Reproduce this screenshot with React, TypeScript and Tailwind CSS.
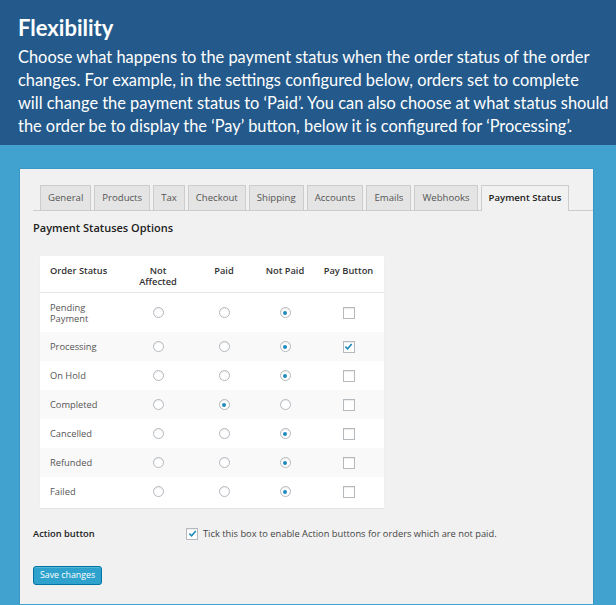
const rows = [
  { name: 'Pending Payment', sel: 2, pay: false, tall: true },
  { name: 'Processing', sel: 2, pay: true },
  { name: 'On Hold', sel: 2, pay: false },
  { name: 'Completed', sel: 1, pay: false },
  { name: 'Cancelled', sel: 2, pay: false },
  { name: 'Refunded', sel: 2, pay: false },
  { name: 'Failed', sel: 2, pay: false },
];

const tabs = ['General', 'Products', 'Tax', 'Checkout', 'Shipping', 'Accounts', 'Emails', 'Webhooks', 'Payment Status'];

const Radio = ({ on }: { on: boolean }) => (
  <span className="w-[11px] h-[11px] rounded-full border border-[#b4b9be] bg-white shadow-[inset_0_1px_1px_rgba(0,0,0,0.08)] flex items-center justify-center">
    {on && <span className="w-[4px] h-[4px] rounded-full bg-[#1e8cbe]" />}
  </span>
);

const Check = ({ on }: { on: boolean }) => (
  <span className="w-[12px] h-[12px] border border-[#b4b9be] bg-white shadow-[inset_0_1px_1px_rgba(0,0,0,0.08)] flex items-center justify-center">
    {on && (
      <svg width="9" height="9" viewBox="0 0 10 10">
        <path d="M1.5 5.2 L4 7.6 L8.6 2.2" fill="none" stroke="#1e8cbe" strokeWidth="1.8" />
      </svg>
    )}
  </span>
);

export default function App() {
  return (
    <div className="w-[616px] h-[605px] overflow-hidden bg-[#41a2d0] font-['Open_Sans',sans-serif]">
      <div className="h-[145px] bg-[#245a8b] pl-[18px] pt-[14px] text-white font-['Lato',sans-serif]">
        <h1 className="text-[22px] font-bold leading-[28px]">Flexibility</h1>
        <p className="w-[598px] whitespace-nowrap text-[16.4px] leading-[23px] mt-[3px]">
          Choose what happens to the payment status when the order status of the order<br />
          changes. For example, in the settings configured below, orders set to complete<br />
          will change the payment status to ‘Paid’. You can also choose at what status should<br />
          the order be to display the ‘Pay’ button, below it is configured for ‘Processing’.
        </p>
      </div>

      <div className="ml-[19px] mt-[23px] w-[575px] h-[436px] bg-[#f1f1f1] border-t border-l border-r border-[#3b97c6] pt-[16px] pl-[13px]">
        <div className="flex gap-[3px] pl-[7px] border-b border-[#cccccc] h-[26px] items-end">
          {tabs.map((t) => {
            const active = t === 'Payment Status';
            return (
              <div
                key={t}
                className={
                  active
                    ? 'h-[26px] px-[7px] flex items-center whitespace-nowrap text-[9.6px] font-semibold text-[#222] bg-[#f1f1f1] border border-b-0 border-[#cccccc] -mb-px'
                    : 'h-[25px] px-[7px] flex items-center whitespace-nowrap text-[9.6px] text-[#555] bg-[#e4e4e4] border border-b-0 border-[#cccccc]'
                }
              >
                {t}
              </div>
            );
          })}
        </div>

        <h2 className="mt-[8px] text-[11px] font-semibold text-[#222] leading-[18px]">Payment Statuses Options</h2>

        <div className="mt-[19px] ml-[7px] w-[344px] bg-white shadow-[0_1px_1px_rgba(0,0,0,0.06)] text-[9.3px] pb-[2px]">
          <div className="grid grid-cols-[85px_66px_66px_56px_71px] h-[37px] border-b border-[#e5e5e5] text-[#333] font-semibold leading-[11px] pt-[9px]">
            <div className="pl-[10px]">Order Status</div>
            <div className="text-center">Not<br />Affected</div>
            <div className="text-center">Paid</div>
            <div className="text-center">Not Paid</div>
            <div className="text-center">Pay Button</div>
          </div>
          {rows.map((r, i) => (
            <div
              key={r.name}
              className={`grid grid-cols-[85px_66px_66px_56px_71px] items-center text-[#555] ${r.tall ? 'h-[39px]' : 'h-[29px]'} ${i % 2 === 1 ? 'bg-[#f9f9f9]' : 'bg-white'}`}
            >
              <div className={`pl-[10px] ${r.tall ? 'leading-[11px] w-[60px]' : ''}`}>{r.name}</div>
              {[0, 1, 2].map((c) => (
                <div key={c} className="flex justify-center">
                  <Radio on={r.sel === c} />
                </div>
              ))}
              <div className="flex justify-center">
                <Check on={r.pay} />
              </div>
            </div>
          ))}
        </div>

        <div className="flex items-center mt-[19px] text-[9.3px]">
          <div className="w-[153px] font-semibold text-[#222]">Action button</div>
          <Check on />
          <span className="ml-[5px] text-[#444]">Tick this box to enable Action buttons for orders which are not paid.</span>
        </div>

        <button className="mt-[25px] h-[19px] px-[6px] bg-[#2ea2cc] border border-[#0074a2] rounded-[3px] text-white text-[8.8px] leading-[17px] shadow-[inset_0_1px_0_rgba(120,200,230,0.5)]">
          Save changes
        </button>
      </div>
    </div>
  );
}
